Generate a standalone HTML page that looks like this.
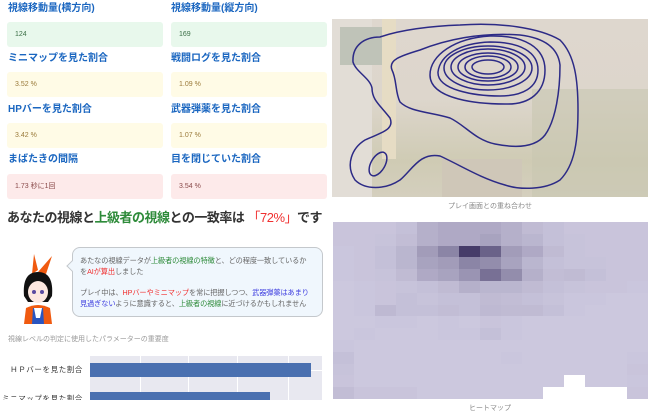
<!DOCTYPE html>
<html><head><meta charset="utf-8">
<style>
*{margin:0;padding:0;box-sizing:border-box}
body{width:650px;height:415px;overflow:hidden;background:#fff;font-family:"Liberation Sans","Noto Sans CJK JP",sans-serif;position:relative}
.lb{position:absolute;font-size:10px;font-weight:bold;color:#1a66c0;line-height:12px}
.bx{position:absolute;width:156px;height:25px;border-radius:3px;font-size:7px;line-height:25px;padding-left:8px}
.g{background:#e8f8ec;color:#3a6e45}
.y{background:#fffbe6;color:#9a7a3a}
.r{background:#fdeaea;color:#8a4a4a}
.abs{position:absolute}
</style></head><body>
<div class="lb" style="left:8px;top:3px">視線移動量(横方向)</div>
<div class="lb" style="left:171px;top:3px">視線移動量(縦方向)</div>
<div class="bx g" style="left:7px;top:22px">124</div>
<div class="bx g" style="left:171px;top:22px">169</div>
<div class="lb" style="left:8px;top:53px">ミニマップを見た割合</div>
<div class="lb" style="left:171px;top:53px">戦闘ログを見た割合</div>
<div class="bx y" style="left:7px;top:72px">3.52 %</div>
<div class="bx y" style="left:171px;top:72px">1.09 %</div>
<div class="lb" style="left:8px;top:104px">HPバーを見た割合</div>
<div class="lb" style="left:171px;top:104px">武器弾薬を見た割合</div>
<div class="bx y" style="left:7px;top:123px">3.42 %</div>
<div class="bx y" style="left:171px;top:123px">1.07 %</div>
<div class="lb" style="left:8px;top:154px">まばたきの間隔</div>
<div class="lb" style="left:171px;top:154px">目を閉じていた割合</div>
<div class="bx r" style="left:7px;top:174px">1.73 秒に1回</div>
<div class="bx r" style="left:171px;top:174px">3.54 %</div>

<div class="abs" style="left:7px;top:207px;font-size:13px;font-weight:bold;color:#333;white-space:nowrap;letter-spacing:-0.5px">あなたの視線と<span style="color:#2e8b3a">上級者の視線</span>との一致率は <span style="color:#f03030;font-weight:normal">「72%」</span>です</div>

<svg class="abs" style="left:18px;top:252px" width="40" height="72" viewBox="0 0 40 72">
<path d="M14 22 L16 2 L20 18 Z M20 20 L34 4 L28 22 Z" fill="#f05a10"/>
<path d="M6 44 Q4 20 20 20 Q36 20 34 44 L30 50 L10 50 Z" fill="#111"/>
<ellipse cx="20" cy="40" rx="10" ry="11" fill="#fde8e0"/>
<path d="M10 32 Q20 24 30 32 L30 28 Q20 20 10 28Z" fill="#111"/>
<circle cx="16" cy="40" r="2" fill="#5a4aa0"/><circle cx="24" cy="40" r="2" fill="#5a4aa0"/>
<path d="M6 72 L8 56 Q20 50 32 56 L34 72 Z" fill="#f05a10"/>
<path d="M14 72 L15 56 L25 56 L26 72Z" fill="#2a55c0"/>
<path d="M16 56 L24 56 L22 66 L18 66Z" fill="#fff"/>
</svg>

<div class="abs" style="left:72px;top:247px;width:251px;height:70px;border:1px solid #c4c8cc;border-radius:8px;background:#f0f7fd;font-size:7.2px;line-height:10.5px;color:#666;padding:8px 3px 0 7px;letter-spacing:-0.1px;white-space:nowrap">
<div>あたなの視線データが<span style="color:#2e8b3a">上級者の視線の特徴</span>と、どの程度一致しているか<br>を<span style="color:#f03030">AIが算出</span>しました</div>
<div style="margin-top:11px">プレイ中は、<span style="color:#f03030">HPバーやミニマップ</span>を常に把握しつつ、<span style="color:#4040e0">武器弾薬はあまり</span><br><span style="color:#4040e0">見過ぎない</span>ように意識すると、<span style="color:#2e8b3a">上級者の視線</span>に近づけるかもしれません</div>
</div>
<div class="abs" style="left:68px;top:262px;width:8px;height:8px;background:#f0f7fd;border-left:1px solid #c4c8cc;border-bottom:1px solid #c4c8cc;transform:rotate(45deg)"></div>

<div class="abs" style="left:8px;top:334px;font-size:7px;color:#999">視線レベルの判定に使用したパラメーターの重要度</div>
<div class="abs" style="left:90px;top:356px;width:232px;height:44px;background:#e8e8f0;overflow:hidden">
<div class="abs" style="left:50px;top:0;width:1px;height:44px;background:#fff"></div>
<div class="abs" style="left:98px;top:0;width:1px;height:44px;background:#fff"></div>
<div class="abs" style="left:147px;top:0;width:1px;height:44px;background:#fff"></div>
<div class="abs" style="left:198px;top:0;width:1px;height:44px;background:#fff"></div>
<div class="abs" style="left:0;top:14px;width:232px;height:1px;background:#fff"></div>
<div class="abs" style="left:0;top:7px;width:221px;height:14px;background:#4a70b0"></div>
<div class="abs" style="left:0;top:36px;width:180px;height:14px;background:#4a70b0"></div>
</div>
<div class="abs" style="left:0;width:83px;text-align:right;top:364px;font-size:7.5px;color:#333;letter-spacing:0.6px;white-space:nowrap">ＨＰバーを見た割合</div>
<div class="abs" style="left:0;width:83px;text-align:right;top:393px;height:7px;overflow:hidden;font-size:7.5px;color:#333;letter-spacing:0.6px;line-height:11px;white-space:nowrap">ミニマップを見た割合</div>

<div class="abs" style="left:332px;top:19px;width:316px;height:178px;background:linear-gradient(180deg,#ded7ce 0%,#ddd6cc 45%,#cfcbb4 80%,#d4cfbe 100%);overflow:hidden">
<div class="abs" style="left:0;top:0;width:40px;height:178px;background:#e2ddd6"></div>
<div class="abs" style="left:50px;top:0;width:14px;height:140px;background:#e6dcc4"></div>
<div class="abs" style="left:8px;top:8px;width:42px;height:38px;background:#bfc3b8"></div>
<div class="abs" style="left:200px;top:70px;width:116px;height:108px;background:#c8c6b0;opacity:.6"></div>
<div class="abs" style="left:110px;top:140px;width:80px;height:38px;background:#cfc7b8"></div>
</div>
<svg class="abs" style="left:0;top:0" width="650" height="200" fill="none" stroke="#2c2a86" stroke-width="1.5">
<path d="M353,62 C352,45 365,37 380,37 C400,30 430,26 460,25 C500,22 540,28 560,40 C575,55 578,80 578,110 C578,140 575,165 560,180 C545,190 520,190 505,185 C480,178 460,165 440,156 C420,152 412,170 400,180 C385,190 365,190 355,180 C345,165 352,148 365,140 C380,133 395,130 390,118 C380,105 372,100 372,88 C370,78 356,72 353,62 Z"/>
<path d="M392,70 C388,60 400,56 420,50 C445,40 480,32 520,35 C545,38 558,48 560,65 C560,90 556,120 545,135 C535,148 515,148 495,144 C475,140 465,125 450,118 C430,112 410,112 400,102 C395,92 397,80 392,70 Z"/>
<ellipse cx="378" cy="164" rx="7" ry="13" transform="rotate(30 378 164)"/>
<path d="M430,75 C430,55 455,38 490,36 C525,35 545,48 545,70 C545,92 530,105 505,104 C480,104 430,100 430,75 Z"/>
<path d="M438,72 C440,55 460,43 490,42 C520,42 538,52 538,70 C538,88 522,96 500,96 C475,96 437,90 438,72 Z"/>
<ellipse cx="488" cy="68" rx="44" ry="22"/>
<ellipse cx="488" cy="67" rx="37" ry="18"/>
<ellipse cx="488" cy="67" rx="30" ry="14"/>
<ellipse cx="488" cy="67" rx="23" ry="11"/>
<ellipse cx="488" cy="67" rx="16" ry="7"/>
</svg>
<div class="abs" style="left:332px;top:201px;width:316px;text-align:center;font-size:7px;color:#888">プレイ画面との重ね合わせ</div>

<div id="hm" class="abs" style="left:333px;top:222px;width:315px;height:177px;background:#cac6de"></div>
<div class="abs" style="left:332px;top:403px;width:316px;text-align:center;font-size:7px;color:#888">ヒートマップ</div>
<script>
var M=[
[.1,.1,.1,.15,.3,.35,.35,.35,.3,.2,.15,.1,.1,.1,.1],
[.1,.1,.12,.18,.3,.35,.35,.4,.3,.25,.15,.12,.1,.1,.1],
[.08,.1,.15,.25,.45,.6,1,.8,.45,.35,.2,.12,.1,.1,.1],
[.08,.1,.15,.25,.4,.45,.6,.55,.4,.25,.15,.12,.12,.1,.1],
[.08,.1,.12,.2,.35,.4,.5,.72,.55,.3,.18,.2,.15,.1,.1],
[.05,.08,.1,.12,.15,.2,.3,.25,.25,.2,.15,.12,.1,.1,.08],
[.05,.08,.1,.15,.12,.15,.15,.2,.18,.15,.12,.08,.08,.05,.05],
[.05,.08,.22,.15,.15,.18,.15,.22,.2,.2,.15,.08,.05,.05,.05],
[.05,.05,.08,.08,.05,.08,.05,.1,.08,.05,.05,.05,.05,.05,.05],
[.05,.08,.05,.05,.05,.08,.08,.15,.08,.05,.05,.05,.05,.05,.05],
[.08,.05,.05,.05,.05,.05,.05,.05,.05,.05,.05,.05,.05,.05,.05],
[.15,.05,.05,.05,.05,.05,.05,.05,.08,.05,.05,.05,.05,.05,.08],
[.12,.05,.05,.05,.05,.05,.05,.05,.05,.05,.05,.05,.05,.05,.1],
[.1,.05,.05,.05,.05,.05,.05,.05,.05,.05,.05,-1,.05,.05,.08],
[.18,.1,.1,.1,.05,.05,.05,.05,.05,.05,-1,-1,-1,-1,.1]];
var h=document.getElementById('hm'),s='';
var a=[206,202,224],b=[70,60,105];
for(var r=0;r<15;r++)for(var c=0;c<15;c++){var v=M[r][c];var col;
if(v<0)col='#fff';else{v=Math.pow(v,1.4);col='rgb('+[0,1,2].map(function(i){return Math.round(a[i]+(b[i]-a[i])*v)}).join(',')+')';}
s+='<div style="position:absolute;left:'+(c*21)+'px;top:'+(r*11.8)+'px;width:21px;height:12px;background:'+col+'"></div>';}
h.innerHTML=s;
</script>
</body></html>
